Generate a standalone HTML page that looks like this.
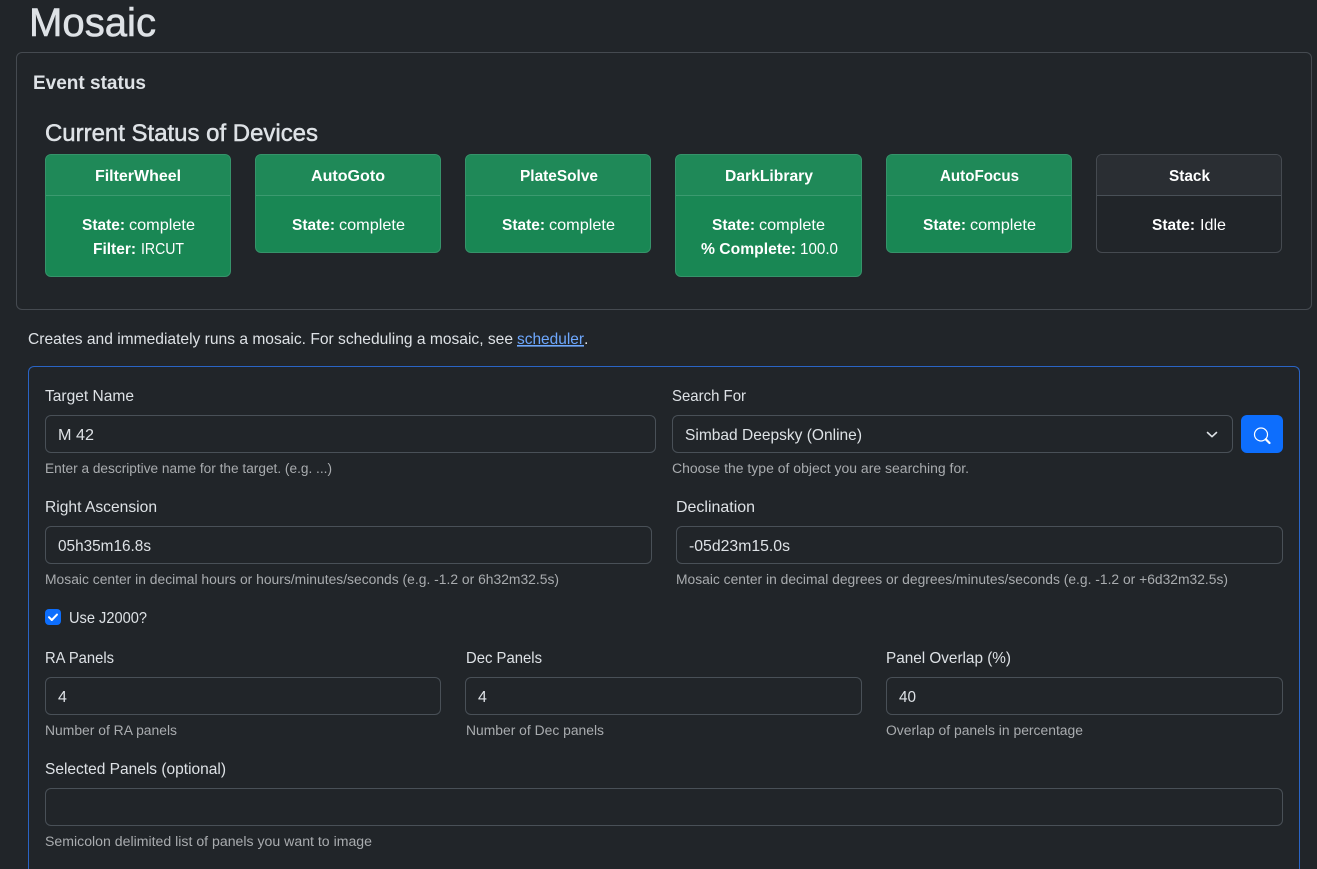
<!DOCTYPE html>
<html lang="en">
<head>
<meta charset="utf-8">
<title>Mosaic</title>
<style>
html,body{margin:0;padding:0;background:#212529;width:1317px;height:869px;overflow:hidden;}
body{position:relative;font-family:"Liberation Sans",sans-serif;}
.b{position:absolute;box-sizing:border-box;border-radius:6px;}
.outer{left:16px;top:52px;width:1296px;height:258px;border:1px solid #454a50;}
.form{left:28px;top:366px;width:1272px;height:503px;border:1px solid #2a64c4;border-bottom:0;border-radius:6px 6px 0 0;}
.card{box-sizing:border-box;position:absolute;top:154px;width:186px;border-radius:6px;border:1px solid #36936a;background:#198754;overflow:hidden;}
.card i{display:block;height:41px;box-sizing:border-box;background:#1f8958;border-bottom:1px solid #3c9a70;}
.card.idle{background:#212529;border-color:#454a50;}
.card.idle i{background:#2a2e33;border-color:#495057;}
.inp{height:38px;border:1px solid #495057;background:#212529;}
.btn{left:1241px;top:415px;width:42px;height:38px;background:#0d6efd;}
.chk{left:45px;top:609px;width:16px;height:16px;background:#0d6efd;border-radius:4px;}
svg.t{position:absolute;left:0;top:0;display:block;}
svg.t text{font-family:"Liberation Sans",sans-serif;font-size:16px;fill:#dee2e6;}
svg.t .bd{font-weight:700;}
svg.t .w{fill:#fff;}
svg.t .s{font-size:13.5px;fill:#a9acaf;}
</style>
</head>
<body>
<div class="b outer"></div>
<div class="card" style="left:45px;height:123px"><i></i></div>
<div class="card" style="left:255px;height:99px"><i></i></div>
<div class="card" style="left:465px;height:99px"><i></i></div>
<div class="card" style="left:675px;width:187px;height:123px"><i></i></div>
<div class="card" style="left:886px;height:99px"><i></i></div>
<div class="card idle" style="left:1096px;height:99px"><i></i></div>

<div class="b form"></div>
<div class="b inp" style="left:45px;top:415px;width:611px"></div>
<div class="b inp" style="left:672px;top:415px;width:561px"></div>
<div class="b btn"></div>
<div class="b inp" style="left:45px;top:526px;width:607px"></div>
<div class="b inp" style="left:676px;top:526px;width:607px"></div>
<div class="b chk"></div>
<div class="b inp" style="left:45px;top:677px;width:396px"></div>
<div class="b inp" style="left:465px;top:677px;width:397px"></div>
<div class="b inp" style="left:886px;top:677px;width:397px"></div>
<div class="b inp" style="left:45px;top:788px;width:1238px"></div>

<svg class="t" width="1317" height="869" viewBox="0 0 1317 869" xmlns="http://www.w3.org/2000/svg">
<text x="29" y="36" style="font-size:40px;stroke:#dee2e6;stroke-width:.6px" textLength="127" lengthAdjust="spacingAndGlyphs">Mosaic</text>
<text x="33" y="89" class="bd" style="font-size:19px" textLength="113" lengthAdjust="spacingAndGlyphs">Event status</text>
<text x="45" y="141" style="font-size:24px;stroke:#dee2e6;stroke-width:.5px" textLength="273" lengthAdjust="spacingAndGlyphs">Current Status of Devices</text>

<text x="95" y="181" class="bd w" textLength="86" lengthAdjust="spacingAndGlyphs">FilterWheel</text>
<text x="82" y="230" class="bd w" textLength="43" lengthAdjust="spacingAndGlyphs">State:</text>
<text x="129" y="230" class="w" textLength="66" lengthAdjust="spacingAndGlyphs">complete</text>
<text x="93" y="254" class="bd w" textLength="43" lengthAdjust="spacingAndGlyphs">Filter:</text>
<text x="141" y="254" class="w" textLength="43" lengthAdjust="spacingAndGlyphs">IRCUT</text>

<text x="311" y="181" class="bd w" textLength="74" lengthAdjust="spacingAndGlyphs">AutoGoto</text>
<text x="292" y="230" class="bd w" textLength="43" lengthAdjust="spacingAndGlyphs">State:</text>
<text x="339" y="230" class="w" textLength="66" lengthAdjust="spacingAndGlyphs">complete</text>

<text x="520" y="181" class="bd w" textLength="78" lengthAdjust="spacingAndGlyphs">PlateSolve</text>
<text x="502" y="230" class="bd w" textLength="43" lengthAdjust="spacingAndGlyphs">State:</text>
<text x="549" y="230" class="w" textLength="66" lengthAdjust="spacingAndGlyphs">complete</text>

<text x="725" y="181" class="bd w" textLength="88" lengthAdjust="spacingAndGlyphs">DarkLibrary</text>
<text x="712" y="230" class="bd w" textLength="43" lengthAdjust="spacingAndGlyphs">State:</text>
<text x="759" y="230" class="w" textLength="66" lengthAdjust="spacingAndGlyphs">complete</text>
<text x="701" y="254" class="bd w" textLength="95" lengthAdjust="spacingAndGlyphs">% Complete:</text>
<text x="800" y="254" class="w" textLength="38" lengthAdjust="spacingAndGlyphs">100.0</text>

<text x="940" y="181" class="bd w" textLength="79" lengthAdjust="spacingAndGlyphs">AutoFocus</text>
<text x="923" y="230" class="bd w" textLength="43" lengthAdjust="spacingAndGlyphs">State:</text>
<text x="970" y="230" class="w" textLength="66" lengthAdjust="spacingAndGlyphs">complete</text>

<text x="1169" y="181" class="bd w" textLength="41" lengthAdjust="spacingAndGlyphs">Stack</text>
<text x="1152" y="230" class="bd w" textLength="43" lengthAdjust="spacingAndGlyphs">State:</text>
<text x="1200" y="230" class="w" textLength="26" lengthAdjust="spacingAndGlyphs">Idle</text>

<text x="28" y="344" textLength="485" lengthAdjust="spacingAndGlyphs">Creates and immediately runs a mosaic. For scheduling a mosaic, see</text>
<text x="517" y="344" style="fill:#6ea8fe;text-decoration:underline" textLength="67" lengthAdjust="spacingAndGlyphs">scheduler</text>
<text x="584" y="344">.</text>

<text x="45" y="401" textLength="89" lengthAdjust="spacingAndGlyphs">Target Name</text>
<text x="672" y="401" textLength="74" lengthAdjust="spacingAndGlyphs">Search For</text>
<text x="58" y="440" textLength="36" lengthAdjust="spacingAndGlyphs">M 42</text>
<text x="685" y="440" textLength="177" lengthAdjust="spacingAndGlyphs">Simbad Deepsky (Online)</text>
<text x="45" y="473" class="s" textLength="287" lengthAdjust="spacingAndGlyphs">Enter a descriptive name for the target. (e.g. ...)</text>
<text x="672" y="473" class="s" textLength="297" lengthAdjust="spacingAndGlyphs">Choose the type of object you are searching for.</text>

<text x="45" y="512" textLength="112" lengthAdjust="spacingAndGlyphs">Right Ascension</text>
<text x="676" y="512" textLength="79" lengthAdjust="spacingAndGlyphs">Declination</text>
<text x="58" y="551" textLength="93" lengthAdjust="spacingAndGlyphs">05h35m16.8s</text>
<text x="689" y="551" textLength="101" lengthAdjust="spacingAndGlyphs">-05d23m15.0s</text>
<text x="45" y="584" class="s" textLength="514" lengthAdjust="spacingAndGlyphs">Mosaic center in decimal hours or hours/minutes/seconds (e.g. -1.2 or 6h32m32.5s)</text>
<text x="676" y="584" class="s" textLength="552" lengthAdjust="spacingAndGlyphs">Mosaic center in decimal degrees or degrees/minutes/seconds (e.g. -1.2 or +6d32m32.5s)</text>

<text x="69" y="623" textLength="78" lengthAdjust="spacingAndGlyphs">Use J2000?</text>

<text x="45" y="663" textLength="69" lengthAdjust="spacingAndGlyphs">RA Panels</text>
<text x="466" y="663" textLength="76" lengthAdjust="spacingAndGlyphs">Dec Panels</text>
<text x="886" y="663" textLength="125" lengthAdjust="spacingAndGlyphs">Panel Overlap (%)</text>
<text x="58" y="702">4</text>
<text x="478" y="702">4</text>
<text x="899" y="702" textLength="17" lengthAdjust="spacingAndGlyphs">40</text>
<text x="45" y="735" class="s" textLength="132" lengthAdjust="spacingAndGlyphs">Number of RA panels</text>
<text x="466" y="735" class="s" textLength="138" lengthAdjust="spacingAndGlyphs">Number of Dec panels</text>
<text x="886" y="735" class="s" textLength="197" lengthAdjust="spacingAndGlyphs">Overlap of panels in percentage</text>

<text x="45" y="774" textLength="181" lengthAdjust="spacingAndGlyphs">Selected Panels (optional)</text>
<text x="45" y="846" class="s" textLength="327" lengthAdjust="spacingAndGlyphs">Semicolon delimited list of panels you want to image</text>

<path d="M1207.500 432.500l4.500 4.200 4.500-4.200" fill="none" stroke="#dee2e6" stroke-width="1.600" stroke-linecap="round" stroke-linejoin="round"/>
<circle cx="1261" cy="434.500" r="6.500" fill="none" stroke="#fff" stroke-width="1.200"/>
<path d="M1265.800 439.300l3.700 3.700" fill="none" stroke="#fff" stroke-width="2.200" stroke-linecap="round"/>
<path d="M49 617.200l2.800 2.800 5.200-5.400" fill="none" stroke="#fff" stroke-width="2" stroke-linecap="round" stroke-linejoin="round"/>
</svg>
</body>
</html>
